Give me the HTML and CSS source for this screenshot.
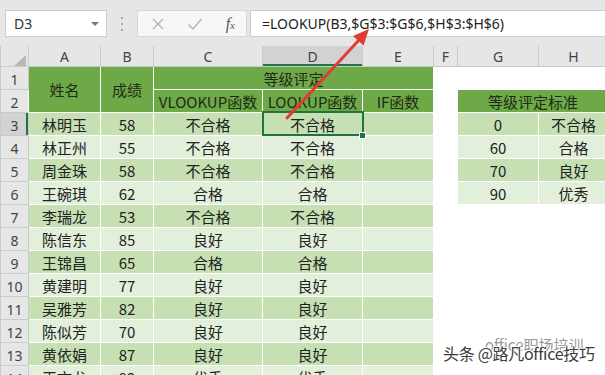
FILE: index.html
```html
<!DOCTYPE html>
<html lang="zh-CN">
<head>
    <meta charset="UTF-8">
    <meta name="viewport" content="width=device-width, initial-scale=1.0">
    <title>等级评定 - LOOKUP</title>
    <link rel="stylesheet" href="styles.css">
</head>
<body>
    <div class="window">
        <!-- formula bar -->
        <div class="formula-bar">
            <div class="name-box">
                <span>D3</span>
                <span class="caret"></span>
            </div>
            <svg class="grip" width="6" height="16" viewBox="0 0 6 16">
                <circle cx="3" cy="2" r="1.2" fill="#a9a9a9"/>
                <circle cx="3" cy="8" r="1.2" fill="#a9a9a9"/>
                <circle cx="3" cy="14" r="1.2" fill="#a9a9a9"/>
            </svg>
            <div class="fx-box">
                <svg width="14" height="14" viewBox="0 0 14 14">
                    <path d="M2 2 L12 12 M12 2 L2 12" stroke="#b3b3b3" stroke-width="1.4" fill="none"/>
                </svg>
                <svg width="16" height="14" viewBox="0 0 16 14">
                    <path d="M1.5 7.5 L6 12 L14.5 2" stroke="#b3b3b3" stroke-width="1.4" fill="none"/>
                </svg>
                <span class="fx">f<small>x</small></span>
            </div>
            <div class="formula">=LOOKUP(B3,$G$3:$G$6,$H$3:$H$6)</div>
        </div>

        <!-- worksheet -->
        <table class="sheet">
            <colgroup>
                <col class="w-rh"><col class="w-a"><col class="w-b"><col class="w-c"><col class="w-d">
                <col class="w-e"><col class="w-f"><col class="w-g"><col class="w-h">
            </colgroup>
            <tr class="col-heads">
                <th class="corner"></th><th>A</th><th>B</th><th>C</th><th class="sel-col">D</th>
                <th>E</th><th>F</th><th>G</th><th>H</th>
            </tr>
            <tr>
                <th>1</th>
                <td class="hd" rowspan="2">姓名</td>
                <td class="hd" rowspan="2">成绩</td>
                <td class="hd" colspan="3">等级评定</td>
                <td></td><td></td><td></td>
            </tr>
            <tr>
                <th>2</th>
                <td class="hd">VLOOKUP函数</td><td class="hd">LOOKUP函数</td><td class="hd">IF函数</td>
                <td></td><td class="hd" colspan="2">等级评定标准</td>
            </tr>
            <tr class="dark">
                <th class="sel-row">3</th>
                <td>林明玉</td><td>58</td><td>不合格</td><td class="active">不合格</td><td></td>
                <td class="blank"></td><td>0</td><td>不合格</td>
            </tr>
            <tr class="light">
                <th>4</th>
                <td>林正州</td><td>55</td><td>不合格</td><td>不合格</td><td></td>
                <td class="blank"></td><td>60</td><td>合格</td>
            </tr>
            <tr class="dark">
                <th>5</th>
                <td>周金珠</td><td>58</td><td>不合格</td><td>不合格</td><td></td>
                <td class="blank"></td><td>70</td><td>良好</td>
            </tr>
            <tr class="light">
                <th>6</th>
                <td>王碗琪</td><td>62</td><td>合格</td><td>合格</td><td></td>
                <td class="blank"></td><td>90</td><td>优秀</td>
            </tr>
            <tr class="dark">
                <th>7</th>
                <td>李瑞龙</td><td>53</td><td>不合格</td><td>不合格</td><td></td>
                <td class="blank" colspan="3"></td>
            </tr>
            <tr class="light">
                <th>8</th>
                <td>陈信东</td><td>85</td><td>良好</td><td>良好</td><td></td>
                <td class="blank" colspan="3"></td>
            </tr>
            <tr class="dark">
                <th>9</th>
                <td>王锦昌</td><td>65</td><td>合格</td><td>合格</td><td></td>
                <td class="blank" colspan="3"></td>
            </tr>
            <tr class="light">
                <th>10</th>
                <td>黄建明</td><td>77</td><td>良好</td><td>良好</td><td></td>
                <td class="blank" colspan="3"></td>
            </tr>
            <tr class="dark">
                <th>11</th>
                <td>吴雅芳</td><td>82</td><td>良好</td><td>良好</td><td></td>
                <td class="blank" colspan="3"></td>
            </tr>
            <tr class="light">
                <th>12</th>
                <td>陈似芳</td><td>70</td><td>良好</td><td>良好</td><td></td>
                <td class="blank" colspan="3"></td>
            </tr>
            <tr class="dark">
                <th>13</th>
                <td>黄依娟</td><td>87</td><td>良好</td><td>良好</td><td></td>
                <td class="blank" colspan="3"></td>
            </tr>
            <tr class="light">
                <th>14</th>
                <td>王文龙</td><td>92</td><td>优秀</td><td>优秀</td><td></td>
                <td class="blank" colspan="3"></td>
            </tr>
        </table>

        <!-- red arrow pointing at the formula -->
        <svg class="arrow" width="605" height="375" viewBox="0 0 605 375">
            <line x1="287" y1="118" x2="359" y2="40" stroke="#e23b33" stroke-width="3" stroke-linecap="round"/>
            <polygon points="369,29 363.5,45.5 353,36" fill="#e23b33"/>
        </svg>

        <div class="watermark">
            <span class="wm-back">office职场培训</span>
            <span class="wm-front">头条 @路凡office技巧</span>
        </div>
    </div>
</body>
</html>
```

FILE: styles.css
```css
body {
    margin: 0;
    background-color: #fff;
    font-family: "Noto Sans CJK SC", sans-serif;
    color: #222;
}
.window {
    position: relative;
    width: 605px;
    height: 375px;
    overflow: hidden;
}

/* formula bar */
.formula-bar {
    display: flex;
    align-items: flex-start;
    height: 46px;
    padding: 10px 0 0 5px;
    box-sizing: border-box;
    background-color: #e6e6e6;
}
.name-box {
    display: flex;
    align-items: center;
    justify-content: space-between;
    width: 102px;
    height: 27px;
    padding: 0 7px 0 8px;
    box-sizing: border-box;
    background-color: #fff;
    border: 1px solid #cdcdcd;
    font-family: "Noto Sans", sans-serif;
    font-size: 14px;
    color: #333;
}
.caret {
    width: 0;
    height: 0;
    border-left: 4px solid transparent;
    border-right: 4px solid transparent;
    border-top: 4px solid #777;
}
.grip {
    margin: 6px 12px 0 12px;
}
.fx-box {
    display: flex;
    align-items: center;
    justify-content: space-between;
    width: 110px;
    height: 27px;
    padding: 0 11px 0 13px;
    box-sizing: border-box;
    background-color: #f7f7f7;
    border: 1px solid #d6d6d6;
}
.fx {
    font-family: "Liberation Serif", serif;
    font-style: italic;
    font-size: 16px;
    color: #555;
}
.fx small {
    font-size: 11px;
}
.formula {
    flex: 1;
    height: 27px;
    margin-left: 3px;
    padding-left: 11px;
    box-sizing: border-box;
    background-color: #fff;
    border: 1px solid #cdcdcd;
    border-right: none;
    font-family: "Noto Sans", sans-serif;
    font-size: 14px;
    line-height: 25px;
    color: #222;
    white-space: nowrap;
}

/* worksheet */
.sheet {
    border-collapse: collapse;
    table-layout: fixed;
    width: 608px;
    font-size: 15px;
}
.w-rh { width: 28px; }
.w-a { width: 72px; }
.w-b { width: 53px; }
.w-c { width: 109px; }
.w-d { width: 100px; }
.w-e { width: 71px; }
.w-f { width: 24px; }
.w-g { width: 81px; }
.w-h { width: 70px; }

.sheet tr {
    height: 23px;
}
.sheet th {
    padding: 0;
    background-color: #e6e6e6;
    border: 1px solid #cacaca;
    font-family: "Noto Sans", sans-serif;
    font-weight: normal;
    font-size: 14px;
    color: #444;
    vertical-align: bottom;
    line-height: 19px;
}
.sheet .col-heads {
    height: 20px;
}
.col-heads th {
    border-top: none;
    line-height: 18px;
}
.corner::before {
    content: "";
    display: block;
    width: 0;
    height: 0;
    margin: 5px 2px 0 auto;
    border-left: 12px solid transparent;
    border-bottom: 11px solid #b8b8b8;
}
.sel-col {
    background-color: #d2d2d2 !important;
    box-shadow: inset 0 -2px 0 #217346;
}
.sel-row {
    background-color: #d2d2d2 !important;
    box-shadow: inset -2px 0 0 #217346;
}

.sheet td {
    padding: 0;
    border: 1px solid #fff;
    text-align: center;
    vertical-align: bottom;
    line-height: 20px;
    white-space: nowrap;
    overflow: hidden;
}
.sheet td.hd {
    background-color: #6da946;
    vertical-align: middle;
    padding-top: 2px;
    color: #1f2a18;
}
.dark td {
    background-color: #c6e0b4;
}
.light td {
    background-color: #e2efda;
}
.sheet td.blank {
    background-color: #fff;
}
.sheet td.active {
    position: relative;
    z-index: 1;
    outline: 2px solid #217346;
    outline-offset: -1px;
    overflow: visible;
}
.active::after {
    content: "";
    position: absolute;
    right: -4px;
    bottom: -4px;
    width: 5px;
    height: 5px;
    background-color: #217346;
    border: 1px solid #fff;
}

/* overlays */
.arrow {
    position: absolute;
    top: 0;
    left: 0;
    z-index: 2;
}
.watermark {
    position: absolute;
    left: 443px;
    top: 336px;
    z-index: 3;
    width: 162px;
    height: 30px;
}
.wm-back {
    position: absolute;
    left: 42px;
    top: -2px;
    font-size: 15px;
    color: #9a9a9a;
    white-space: nowrap;
}
.wm-front {
    position: absolute;
    left: 0;
    top: 5px;
    font-size: 16px;
    color: #3c3c3c;
    white-space: nowrap;
    letter-spacing: -0.3px;
    text-shadow: 1px 0 0 #fff, -1px 0 0 #fff, 0 1px 0 #fff, 0 -1px 0 #fff;
}
```
